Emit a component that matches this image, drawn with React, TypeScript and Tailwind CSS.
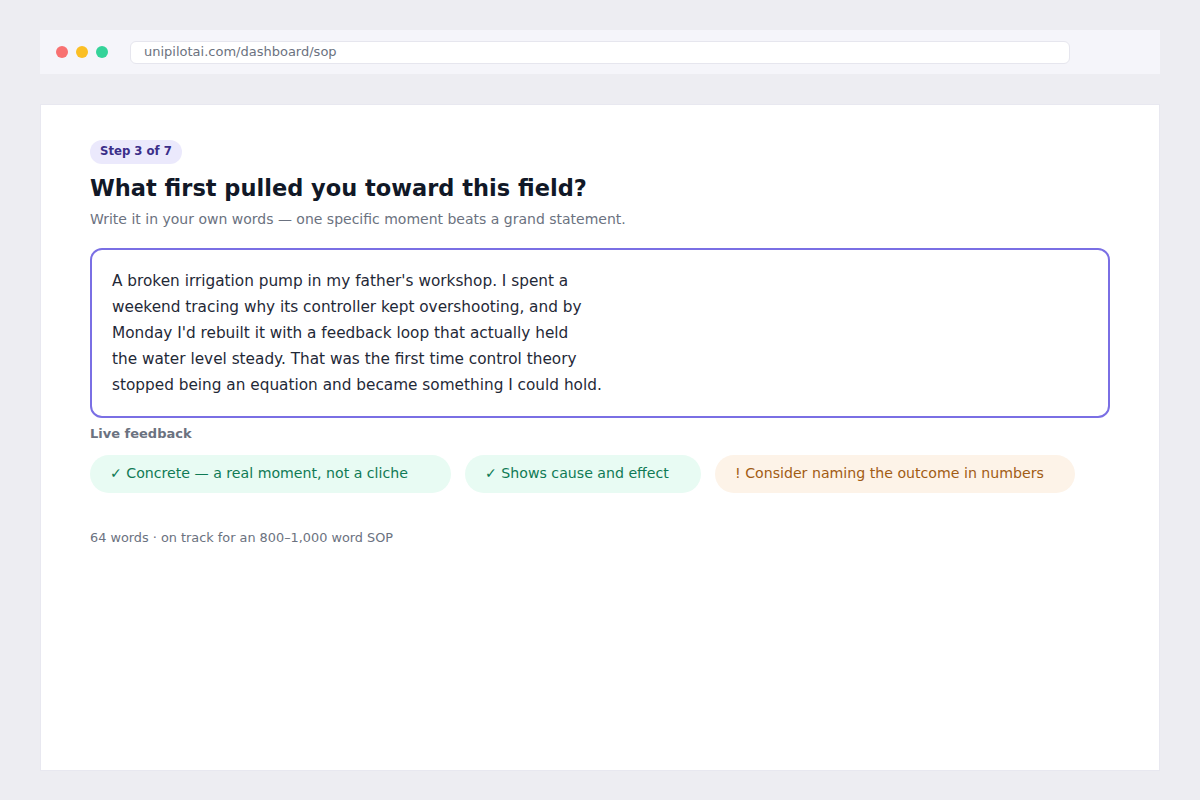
const chips = [
    { text: '✓ Concrete — a real moment, not a cliche', cls: 'w-[361px] bg-[#e8fbf3] text-[#0f7a55]' },
    { text: '✓ Shows cause and effect', cls: 'w-[236px] bg-[#e8fbf3] text-[#0f7a55]' },
    { text: '! Consider naming the outcome in numbers', cls: 'w-[360px] bg-[#fdf3e8] text-[#a15c14]' },
];

const lines = [
    "A broken irrigation pump in my father's workshop. I spent a",
    'weekend tracing why its controller kept overshooting, and by',
    "Monday I'd rebuilt it with a feedback loop that actually held",
    'the water level steady. That was the first time control theory',
    'stopped being an equation and became something I could hold.',
];

const App = () => {
    return (
        <div className="min-h-[800px] bg-[#ededf2] px-10 pt-[30px] pb-[30px] font-['DejaVu_Sans',sans-serif]">
            <div className="flex h-11 items-center bg-[#f5f5fa] pl-[16px]">
                <div className="flex gap-2">
                    <span className="h-3 w-3 rounded-full bg-[#f87171]" />
                    <span className="h-3 w-3 rounded-full bg-[#fbbf24]" />
                    <span className="h-3 w-3 rounded-full bg-[#34d399]" />
                </div>
                <div className="ml-[22px] flex h-[23px] w-[940px] items-center rounded-md border border-[#e6e6ee] bg-white pl-[13px] text-[13px] text-[#6b7280]">
                    unipilotai.com/dashboard/sop
                </div>
            </div>

            <div className="mt-[30px] h-[667px] border border-[#e8e8f0] bg-white px-[49px] pt-[33px]">
                <span className="inline-flex h-6 items-center rounded-full bg-[#ebe9fc] px-[10px] text-[11.7px] font-bold text-[#3b2f8a]">
                    Step 3 of 7
                </span>
                <h1 className="mt-[9px] text-[22.5px] font-bold leading-[30px] text-[#111827]">What first pulled you toward this field?</h1>
                <p className="mt-[6px] text-[14px] leading-[20px] text-[#6b7280]">
                    Write it in your own words — one specific moment beats a grand statement.
                </p>

                <div className="mt-[19px] h-[170px] rounded-xl border-2 border-[#7a6fe4] px-[20px] pt-[18px]">
                    <p className="text-[15.3px] leading-[26px] text-[#1f2937]">
                        {lines.map((l) => (
                            <span key={l} className="block">
                                {l}
                            </span>
                        ))}
                    </p>
                </div>

                <div className="mt-[7px] text-[13px] font-bold leading-[18px] text-[#6b7280]">Live feedback</div>
                <div className="mt-[12px] flex gap-[14px]">
                    {chips.map((c) => (
                        <div key={c.text} className={`flex h-[38px] items-center rounded-full pl-5 text-[14.15px] ${c.cls}`}>
                            {c.text}
                        </div>
                    ))}
                </div>

                <div className="mt-[35px] text-[12.85px] text-[#6b7280]">64 words · on track for an 800–1,000 word SOP</div>
            </div>
        </div>
    );
};

export default App;
